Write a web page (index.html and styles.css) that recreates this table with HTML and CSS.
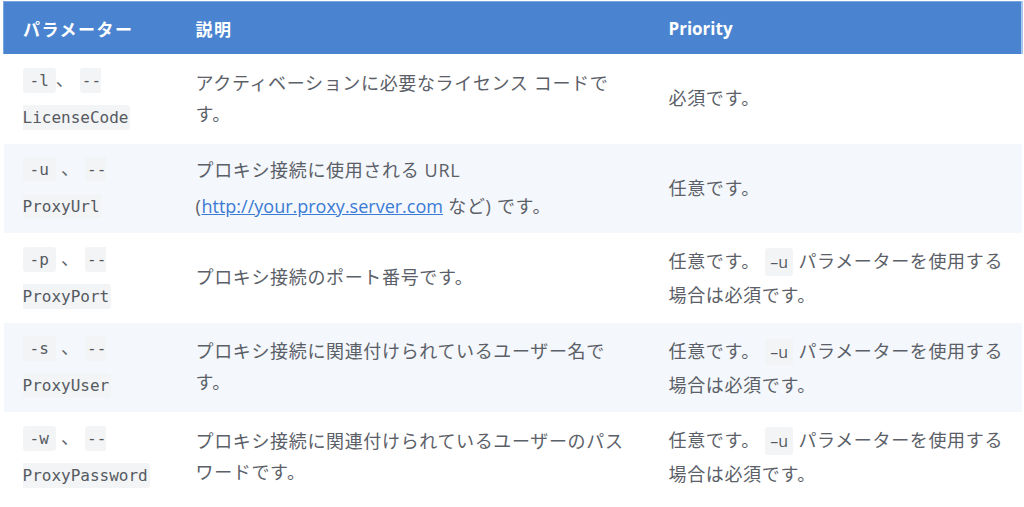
FILE: index.html
```html
<!DOCTYPE html>
<html lang="ja">
<head>
<meta charset="utf-8">
<title>Parameters</title>
<link rel="stylesheet" href="styles.css">
</head>
<body>
<table class="params">
  <colgroup>
    <col class="c1"><col class="c2"><col class="c3">
  </colgroup>
  <thead>
    <tr><th class="ja">パラメーター</th><th class="ja">説明</th><th>Priority</th></tr>
  </thead>
  <tbody>
    <tr>
      <td><code class="short">-l</code>、 <code>--<wbr>LicenseCode</code></td>
      <td>アクティベーションに必要なライセンス コードです。</td>
      <td>必須です。</td>
    </tr>
    <tr class="alt">
      <td><code class="short">-u</code> 、 <code>--<wbr>ProxyUrl</code></td>
      <td class="tall">プロキシ接続に使用される URL<br>(<a href="#">http://your.proxy.server.com</a> など) です。</td>
      <td>任意です。</td>
    </tr>
    <tr>
      <td><code class="short">-p</code> 、 <code>--<wbr>ProxyPort</code></td>
      <td>プロキシ接続のポート番号です。</td>
      <td>任意です。 <code class="sans">–u</code> パラメーターを使用する場合は必須です。</td>
    </tr>
    <tr class="alt">
      <td><code class="short">-s</code> 、 <code>--<wbr>ProxyUser</code></td>
      <td>プロキシ接続に関連付けられているユーザー名です。</td>
      <td>任意です。 <code class="sans">–u</code> パラメーターを使用する場合は必須です。</td>
    </tr>
    <tr>
      <td><code class="short">-w</code> 、 <code>--<wbr>ProxyPassword</code></td>
      <td>プロキシ接続に関連付けられているユーザーのパスワードです。</td>
      <td>任意です。 <code class="sans">–u</code> パラメーターを使用する場合は必須です。</td>
    </tr>
  </tbody>
</table>
</body>
</html>
```
FILE: styles.css
```css
html, body {
  margin: 0;
  padding: 0;
  background: #ffffff;
}
body {
  padding: 1px 3px 0 3px;
  font-family: "Open Sans", "Noto Sans CJK JP", sans-serif;
  color: #5b6068;
}
.params {
  width: 1018px;
  border-collapse: collapse;
  table-layout: fixed;
  font-size: 18px;
  letter-spacing: 0.65px;
}
.c1 { width: 173px; }
.c2 { width: 473px; }
.c3 { width: 372px; }
.params thead th {
  background: #4a84d0;
  color: #ffffff;
  font-weight: 700;
  text-align: left;
  height: 52px;
  padding: 0 19px;
  font-size: 17px;
  letter-spacing: 0;
  border-top: 1px solid #7aa6e0;
}
.params thead th.ja { letter-spacing: 1.5px; }
.params thead th:first-child { border-left: 1px solid #7aa6e0; }
.params thead th:last-child { border-right: 2px solid #a9c6ee; }
.params td {
  height: 89.5px;
  padding: 0 19px;
  line-height: 31px;
  vertical-align: middle;
}
.params td.tall { line-height: 36px; }
.params td:nth-child(2) { padding-right: 17px; }
.params td:nth-child(3) { padding-right: 10px; }
.params tr.alt td { background: #f4f7fb; }
code {
  font-family: "DejaVu Sans Mono", monospace;
  font-size: 16px;
  line-height: 37px;
  letter-spacing: 0;
  background: #f3f4f6;
  color: #555a61;
  padding: 3px 2px;
  border-radius: 3px;
}
code.short { padding: 3px 7px; }
code.sans {
  font-family: "Open Sans", sans-serif;
  font-size: 16px;
  line-height: 36px;
  padding: 3px 5px;
}
a {
  color: #3a7bd5;
  text-decoration: underline;
  letter-spacing: 0;
}
```
